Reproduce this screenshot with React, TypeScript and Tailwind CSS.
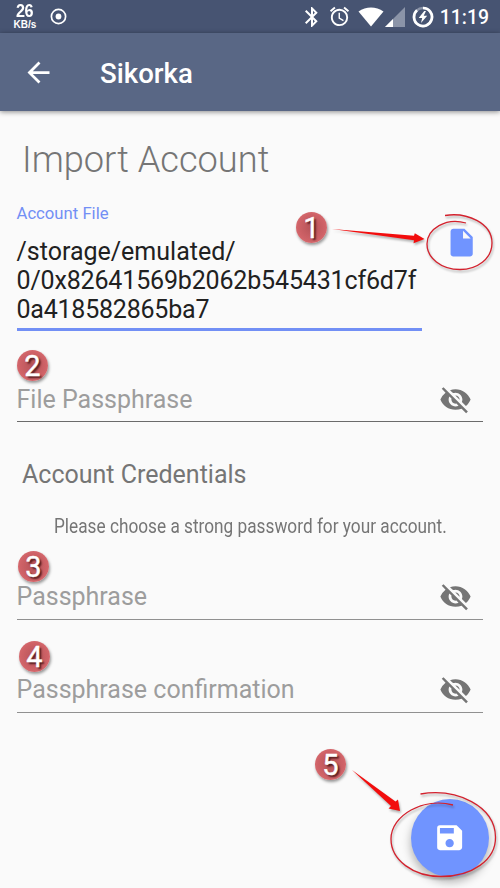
import React from "react";
import { MdAlarm, MdArrowBack, MdBluetooth, MdInsertDriveFile, MdSave, MdVisibilityOff } from "react-icons/md";

function StatusBar() {
  return (
    <div className="flex h-[33px] shrink-0 items-center justify-between bg-[#475472] pr-[11px] pl-[12px] text-white">
      <div className="flex items-center">
        <div className="flex w-[26px] flex-col items-center font-['Liberation_Sans',sans-serif]">
          <span className="h-[17px] scale-x-[0.9] text-[18px] leading-[18px] font-bold tracking-[-0.5px]">26</span>
          <span className="h-[12px] text-[10px] leading-[12px] font-bold whitespace-nowrap">KB/s</span>
        </div>
        <svg className="ml-[12px] size-[17px]" viewBox="0 0 17 17" fill="none">
          <circle cx="8.5" cy="8.5" r="7.1" stroke="white" strokeWidth="1.7" />
          <circle cx="8.5" cy="8.5" r="2.9" fill="white" />
        </svg>
      </div>
      <div className="flex items-center">
        <MdBluetooth className="size-[24px]" />
        <MdAlarm className="ml-[4px] size-[23px]" />
        <svg className="ml-[7px] h-[20px] w-[26px]" viewBox="0 0 26 20">
          <path d="M0.5 4.5C8 -1 18 -1 25.5 4.5L13 19.5Z" fill="white" />
        </svg>
        <svg className="ml-px h-[20px] w-[20px]" viewBox="0 0 20 20">
          <path d="M20 0V20H0Z" fill="#8b94a8" />
          <path d="M8 12V20H0Z" fill="white" />
        </svg>
        <svg className="ml-[7px] size-[22px]" viewBox="0 0 22 22" fill="none">
          <circle cx="11" cy="11" r="9" stroke="#8b94a8" strokeWidth="2.5" />
          <path d="M11 2A9 9 0 1 1 5 4.3" stroke="white" strokeWidth="2.7" />
          <path d="M12.2 5L6.7 12H10.2L9 17L15.2 9.7H11.7L14 5Z" fill="white" />
        </svg>
        <span className="ml-[6px] pt-[2px] text-[19.4px] leading-[24px] font-medium">11:19</span>
      </div>
    </div>
  );
}

function Marker({ n, place }: { n: number; place: string }) {
  return (
    <div
      className={`absolute flex size-[31px] items-center justify-center rounded-full bg-[radial-gradient(circle,#b55358_0%,#cf6267_60%,#e37a7e_100%)] pt-px text-[29px] leading-none text-white shadow-[1px_2px_3px_rgba(0,0,0,0.4)] [-webkit-text-stroke:0.4px_white] [text-shadow:2px_2px_2px_rgba(40,0,0,0.75)] ${place}`}
    >
      {n}
    </div>
  );
}

function PasswordField({ label, className }: { label: string; className: string }) {
  return (
    <div className={`ml-[16.5px] flex w-[466px] items-start justify-between border-b-[1.4px] ${className}`}>
      <span className="text-[25px] leading-[29px] text-[#9d9d9d]">{label}</span>
      <MdVisibilityOff className="mr-[11px] -mt-[2px] size-[33px] text-[#757575]" />
    </div>
  );
}

function Annotations() {
  return (
    <>
      <Marker n={1} place="left-[296px] top-[212px]" />
      <Marker n={2} place="left-[17px] top-[350px]" />
      <Marker n={3} place="left-[18px] top-[551px]" />
      <Marker n={4} place="left-[19px] top-[641px]" />
      <Marker n={5} place="left-[315px] top-[749px]" />
      <svg
        className="pointer-events-none absolute inset-0 h-[888px] w-[500px] drop-shadow-[1px_2px_1px_rgba(0,0,0,0.3)]"
        viewBox="0 0 500 888"
        fill="none"
      >
        <path d="M332 229L414 235.8L414.8 233.2L424.5 239L413.5 243.2L414 240.2Z" fill="#f20d0d" />
        <path d="M352 770L395.5 801.5L398 799.5L400 811L388.5 808.5L391 806Z" fill="#f20d0d" />
        <path
          d="M445 215.5C467 212 492 223 492 243C492 259 477 269.5 460 269.5C441 269.5 427 258 427 244C427 229 446 217 466 223"
          stroke="#d3212d"
          strokeWidth="1.3"
        />
        <path
          d="M420.5 794C457 788 495 806 495.5 837C496 860 472 876.5 441 876.5C413 876.5 391 860 391 839C391 815 424 797 453 805"
          stroke="#d3212d"
          strokeWidth="1.3"
        />
      </svg>
    </>
  );
}

export default function App() {
  return (
    <div className="relative flex h-[888px] w-[500px] flex-col overflow-hidden bg-[#fafafa] font-['Roboto',sans-serif]">
      <StatusBar />
      <header className="flex h-[78px] shrink-0 items-center bg-[#596785] pl-[22px] text-white shadow-[0_1px_5px_rgba(0,0,0,0.45)]">
        <MdArrowBack className="size-[33px]" />
        <span className="ml-[45px] pt-[2px] text-[27.6px] leading-[33px] font-medium">Sikorka</span>
      </header>
      <main className="flex flex-col">
        <h1 className="mt-[28px] ml-[22px] text-[36.2px] leading-[42px] font-light text-[#757575]">Import Account</h1>
        <div className="mt-[23px] ml-[16.5px] flex">
          <div className="w-[405px] shrink-0">
            <div className="text-[16.7px] leading-[20px] text-[#728ff5]">Account File</div>
            <div className="mt-[13px] h-[94px] border-b-[3px] border-[#728ff5] text-[25px] leading-[29.2px] whitespace-nowrap text-[#212121]">
              <span>/storage/emulated/</span>
              <br />
              <span className="tracking-[-0.16px]">0/0x82641569b2062b545431cf6d7f</span>
              <br />
              <span className="tracking-[-0.22px]">0a418582865ba7</span>
            </div>
          </div>
          <MdInsertDriveFile className="mt-[22px] ml-[23px] size-[33.3px] text-[#7094ff]" />
        </div>
        <PasswordField label="File Passphrase" className="mt-[54px] h-[37px] border-[#6b6b6b]" />
        <h2 className="mt-[38px] ml-[22px] text-[25px] leading-[29px] text-[#757575]">Account Credentials</h2>
        <p className="mt-[26px] ml-[54px] h-[23px] origin-left scale-x-[0.889] text-[19.4px] leading-[23px] whitespace-nowrap text-[#757575]">
          Please choose a strong password for your account.
        </p>
        <PasswordField label="Passphrase" className="mt-[44px] h-[38px] border-[#909090]" />
        <PasswordField label="Passphrase confirmation" className="mt-[55px] h-[38px] border-[#909090]" />
      </main>
      <button className="absolute top-[799px] left-[411px] flex size-[78px] items-center justify-center rounded-full bg-[#7094ff] text-white shadow-[0_5px_10px_rgba(0,0,0,0.3)]">
        <MdSave className="size-[33.3px]" />
      </button>
      <Annotations />
    </div>
  );
}
